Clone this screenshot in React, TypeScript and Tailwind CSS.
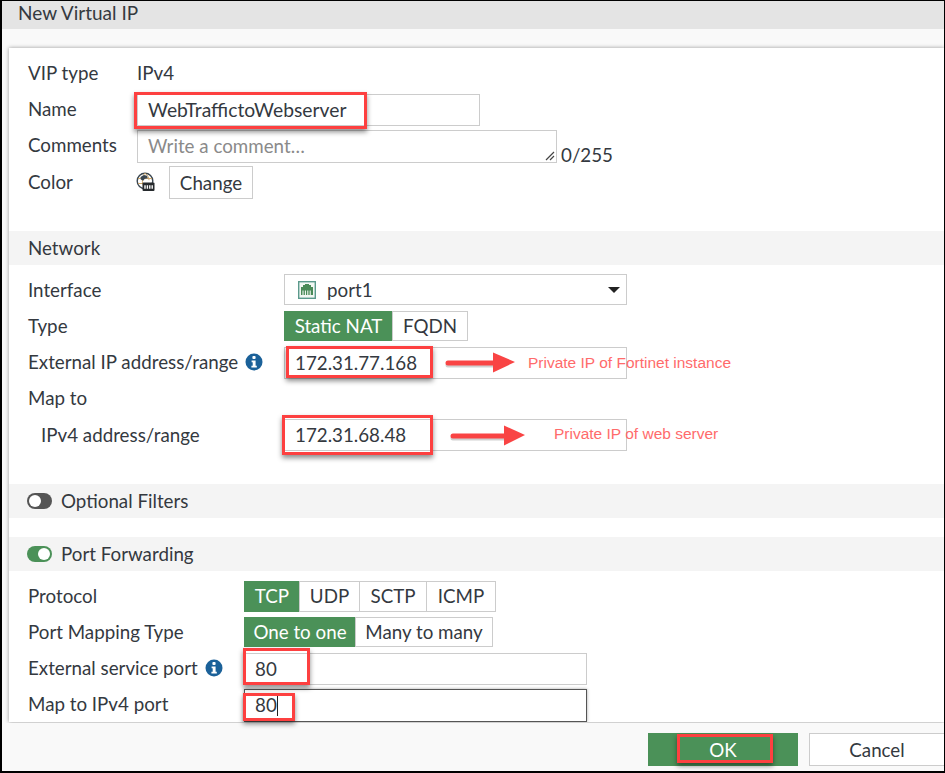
import type { ReactNode } from "react";

function InfoIcon() {
  return (
    <svg width="18" height="18" viewBox="0 0 18 18" className="shrink-0 -mt-[1px]">
      <circle cx="9" cy="9" r="8.5" fill="#1b6199" />
      <rect x="7.4" y="3" width="3.2" height="3" rx="1" fill="#fff" />
      <path d="M6.6 7.4h4v5.4h1.2v1.8H6.4v-1.8h1.3V9.2H6.6z" fill="#fff" />
    </svg>
  );
}

function GlobeIcon() {
  return (
    <svg width="19" height="20" viewBox="0 0 19 20" className="-ml-[1px]">
      <circle cx="9" cy="9" r="7.8" fill="#fff" stroke="#3a4650" strokeWidth="1.4" />
      <path d="M2 6.5h14M2 11.5h7M9 1.2c-3 2-4 10 0 15.5M9 1.2c3 2 4 5 4 7" fill="none" stroke="#c9a060" strokeWidth="0.9" />
      <path d="M4.5 5l3.5-2 3 .8.8 2.4-3 .6-1.6 2-2.4-1.4z" fill="#3a4650" />
      <rect x="6.5" y="10.5" width="12" height="8.5" rx="1" fill="#25292c" />
      <path d="M9 13.2v3.6M11.4 13.2v3.6M13.8 13.2v3.6M16.2 13.2v3.6" stroke="#fff" strokeWidth="1.4" />
    </svg>
  );
}

function PortIcon() {
  return (
    <svg width="18" height="18" viewBox="0 0 18 18">
      <rect x="0.7" y="0.7" width="16.6" height="16.6" fill="#f2f7f3" stroke="#5b9a8c" strokeWidth="1.4" />
      <path d="M3 14V6h2V4h2V3h4v1h2v2h2v8z" fill="#4a8a58" />
      <path d="M5 9.5v4.5M7.4 9.5v4.5M9.8 9.5v4.5M12.2 9.5v4.5" stroke="#fff" strokeWidth="1" />
    </svg>
  );
}

function Toggle({ on }: { on: boolean }) {
  return (
    <div
      className={`w-[25px] h-[16px] rounded-full flex items-center px-[2px] ${
        on ? "bg-[#4b9158] justify-end" : "bg-[#555555] justify-start"
      }`}
    >
      <div className="w-[12px] h-[12px] rounded-full bg-white" />
    </div>
  );
}

function Row({ label, labelWidth, children, indent }: { label: ReactNode; labelWidth: string; children?: ReactNode; indent?: boolean }) {
  return (
    <div className="flex items-center h-[36px]">
      <div className={`${labelWidth} shrink-0 flex items-center gap-[7px] ${indent ? "pl-[13px] pt-[2px]" : ""}`}>{label}</div>
      {children}
    </div>
  );
}

function Segments({ items, height }: { items: { label: string; width: string }[]; height: string }) {
  return (
    <div className={`flex ${height}`}>
      {items.map((item, i) => (
        <div
          key={item.label}
          className={`${item.width} flex items-center justify-center border ${
            i === 0 ? "bg-[#4b9158] border-[#4b9158] text-white" : "bg-white border-[#cccccc] -ml-px"
          }`}
        >
          {item.label}
        </div>
      ))}
    </div>
  );
}

function Band({ toggle, title }: { toggle?: ReactNode; title: string }) {
  return (
    <div className="h-[34px] bg-[#f4f4f4] flex items-center gap-[9px] pl-[18px]">
      {toggle}
      <span className={toggle ? "" : "pl-px"}>{title}</span>
    </div>
  );
}

function TextBox({ value, dark }: { value: ReactNode; dark?: boolean }) {
  return (
    <div
      className={`w-[343px] bg-white border flex items-center pl-[10px] ${
        dark ? "h-[33px] mt-[3px] border-[#555555] shadow-[0_0_3px_rgba(0,0,0,0.35)]" : "h-[32px] mt-[2px] border-[#cccccc]"
      }`}
    >
      {value}
    </div>
  );
}

function RedBox({ className }: { className: string }) {
  return <div className={`absolute border-[3px] border-[#fd4040] shadow-[0_3px_5px_rgba(0,0,0,0.45)] ${className}`} />;
}

function Arrow({ className, long }: { className: string; long?: boolean }) {
  const end = long ? 55 : 49;
  return (
    <svg width={long ? 77 : 71} height="22" viewBox={`0 0 ${long ? 77 : 71} 22`} className={`absolute ${className}`}>
      <path d={`M3 13h${end - 3}`} stroke="#777777" strokeOpacity="0.35" strokeWidth="5" strokeLinecap="round" />
      <path d={`M3 11h${end - 3}`} stroke="#f94444" strokeWidth="5" strokeLinecap="round" />
      <path d={`M${end - 1} 0.5l${long ? 21 : 22} 9.5-${long ? 21 : 22} 10.5z`} fill="#f94444" />
    </svg>
  );
}

export default function App() {
  return (
    <div className="relative w-[945px] h-[773px] overflow-hidden flex flex-col bg-[#f9f9f9] border-t border-l-2 border-b-2 border-r border-black font-['Lato','Liberation_Sans',sans-serif] text-[18.75px] leading-none text-[#34393f]">
      <div className="h-[28px] shrink-0 bg-[#e4e4e4] flex items-center pl-[16px] pb-[5px] text-[19px]">New Virtual IP</div>

      <div className="flex-1 min-h-0 pt-[19px] pl-[7px] overflow-hidden">
        <div className="h-[674px] bg-white shadow-[0_0_4px_rgba(0,0,0,0.4)] overflow-hidden">
          <div className="pt-[7px] pl-[19px] h-[183px]">
            <Row label="VIP type" labelWidth="w-[109px]">
              <span>IPv4</span>
            </Row>
            <Row label="Name" labelWidth="w-[109px]">
              <TextBox value={<span className="text-[19.3px]">WebTraffictoWebserver</span>} />
            </Row>
            <Row label="Comments" labelWidth="w-[109px]">
              <div className="w-[420px] h-[33px] mt-[3px] border border-[#cccccc] flex items-center pl-[10px] text-[#8a8a8a] relative">
                Write a comment…
                <svg width="10" height="10" viewBox="0 0 10 10" className="absolute right-[1px] bottom-[1px]">
                  <path d="M1 9l8-8M5 9l4-4" stroke="#444" strokeWidth="1.2" />
                </svg>
              </div>
              <span className="ml-[4px] mt-[20px]">0/255</span>
            </Row>
            <div className="pt-[1px]">
              <Row label="Color" labelWidth="w-[109px]">
                <GlobeIcon />
                <div className="ml-[14px] mt-[1px] w-[84px] h-[33px] pt-[1px] border border-[#cccccc] flex items-center justify-center">Change</div>
              </Row>
            </div>
          </div>

          <Band title="Network" />
          <div className="pt-[7px] pl-[19px] h-[219px]">
            <Row label="Interface" labelWidth="w-[256px]">
              <div className="w-[343px] h-[31px] -mt-[1px] border border-[#cccccc] flex items-center pl-[13px] pr-[6px]">
                <PortIcon />
                <span className="ml-[11px] pt-[1px]">port1</span>
                <div className="ml-auto w-0 h-0 border-x-[6px] border-x-transparent border-t-[6px] border-t-[#222222]" />
              </div>
            </Row>
            <Row label="Type" labelWidth="w-[256px]">
              <Segments
                height="h-[30px]"
                items={[
                  { label: "Static NAT", width: "w-[109px]" },
                  { label: "FQDN", width: "w-[76px]" },
                ]}
              />
            </Row>
            <Row label={<><span>External IP address/range</span><InfoIcon /></>} labelWidth="w-[256px]">
              <TextBox value="172.31.77.168" />
            </Row>
            <Row label="Map to" labelWidth="w-[256px]" />
            <Row label="IPv4 address/range" labelWidth="w-[256px]" indent>
              <TextBox value="172.31.68.48" />
            </Row>
          </div>

          <Band toggle={<Toggle on={false} />} title="Optional Filters" />
          <div className="h-[19px]" />
          <Band toggle={<Toggle on />} title="Port Forwarding" />
          <div className="pt-[7px] pl-[19px]">
            <Row label="Protocol" labelWidth="w-[216px]">
              <Segments
                height="h-[31px]"
                items={[
                  { label: "TCP", width: "w-[56px]" },
                  { label: "UDP", width: "w-[61px]" },
                  { label: "SCTP", width: "w-[68px]" },
                  { label: "ICMP", width: "w-[70px]" },
                ]}
              />
            </Row>
            <Row label="Port Mapping Type" labelWidth="w-[216px]">
              <Segments
                height="h-[30px]"
                items={[
                  { label: "One to one", width: "w-[112px]" },
                  { label: "Many to many", width: "w-[138px]" },
                ]}
              />
            </Row>
            <Row label={<><span>External service port</span><InfoIcon /></>} labelWidth="w-[216px]">
              <TextBox value="80" />
            </Row>
            <Row label="Map to IPv4 port" labelWidth="w-[216px]">
              <TextBox dark value={<><span>80</span><span className="w-px h-[20px] bg-[#222222]" /></>} />
            </Row>
          </div>
        </div>
      </div>

      <div className="h-[48px] shrink-0 bg-[#f9f9f9] flex items-start pt-[10px] pl-[646px] gap-[11px]">
        <div className="w-[150px] h-[33px] pt-[1px] shrink-0 bg-[#4b9158] text-white flex items-center justify-center">OK</div>
        <div className="w-[136px] h-[33px] pt-[1px] shrink-0 bg-white border border-[#cccccc] flex items-center justify-center">Cancel</div>
      </div>

      {/* annotations drawn on top of the screenshot */}
      <RedBox className="left-[132px] top-[91px] w-[233px] h-[37px]" />
      <RedBox className="left-[284px] top-[345px] w-[147px] h-[32px]" />
      <RedBox className="left-[280px] top-[414px] w-[151px] h-[40px]" />
      <RedBox className="left-[241px] top-[647px] w-[67px] h-[37px]" />
      <RedBox className="left-[241px] top-[692px] w-[52px] h-[28px]" />
      <RedBox className="left-[675px] top-[733px] w-[96px] h-[29px]" />
      <Arrow className="left-[443px] top-[351px]" />
      <Arrow className="left-[448px] top-[424px]" long />
      <span className="absolute left-[526px] top-[354px] font-['Liberation_Sans',sans-serif] text-[15.5px] text-[#ff6b6b]">
        Private IP of Fortinet instance
      </span>
      <span className="absolute left-[552px] top-[425px] font-['Liberation_Sans',sans-serif] text-[15.5px] text-[#ff6b6b]">
        Private IP of web server
      </span>
    </div>
  );
}
